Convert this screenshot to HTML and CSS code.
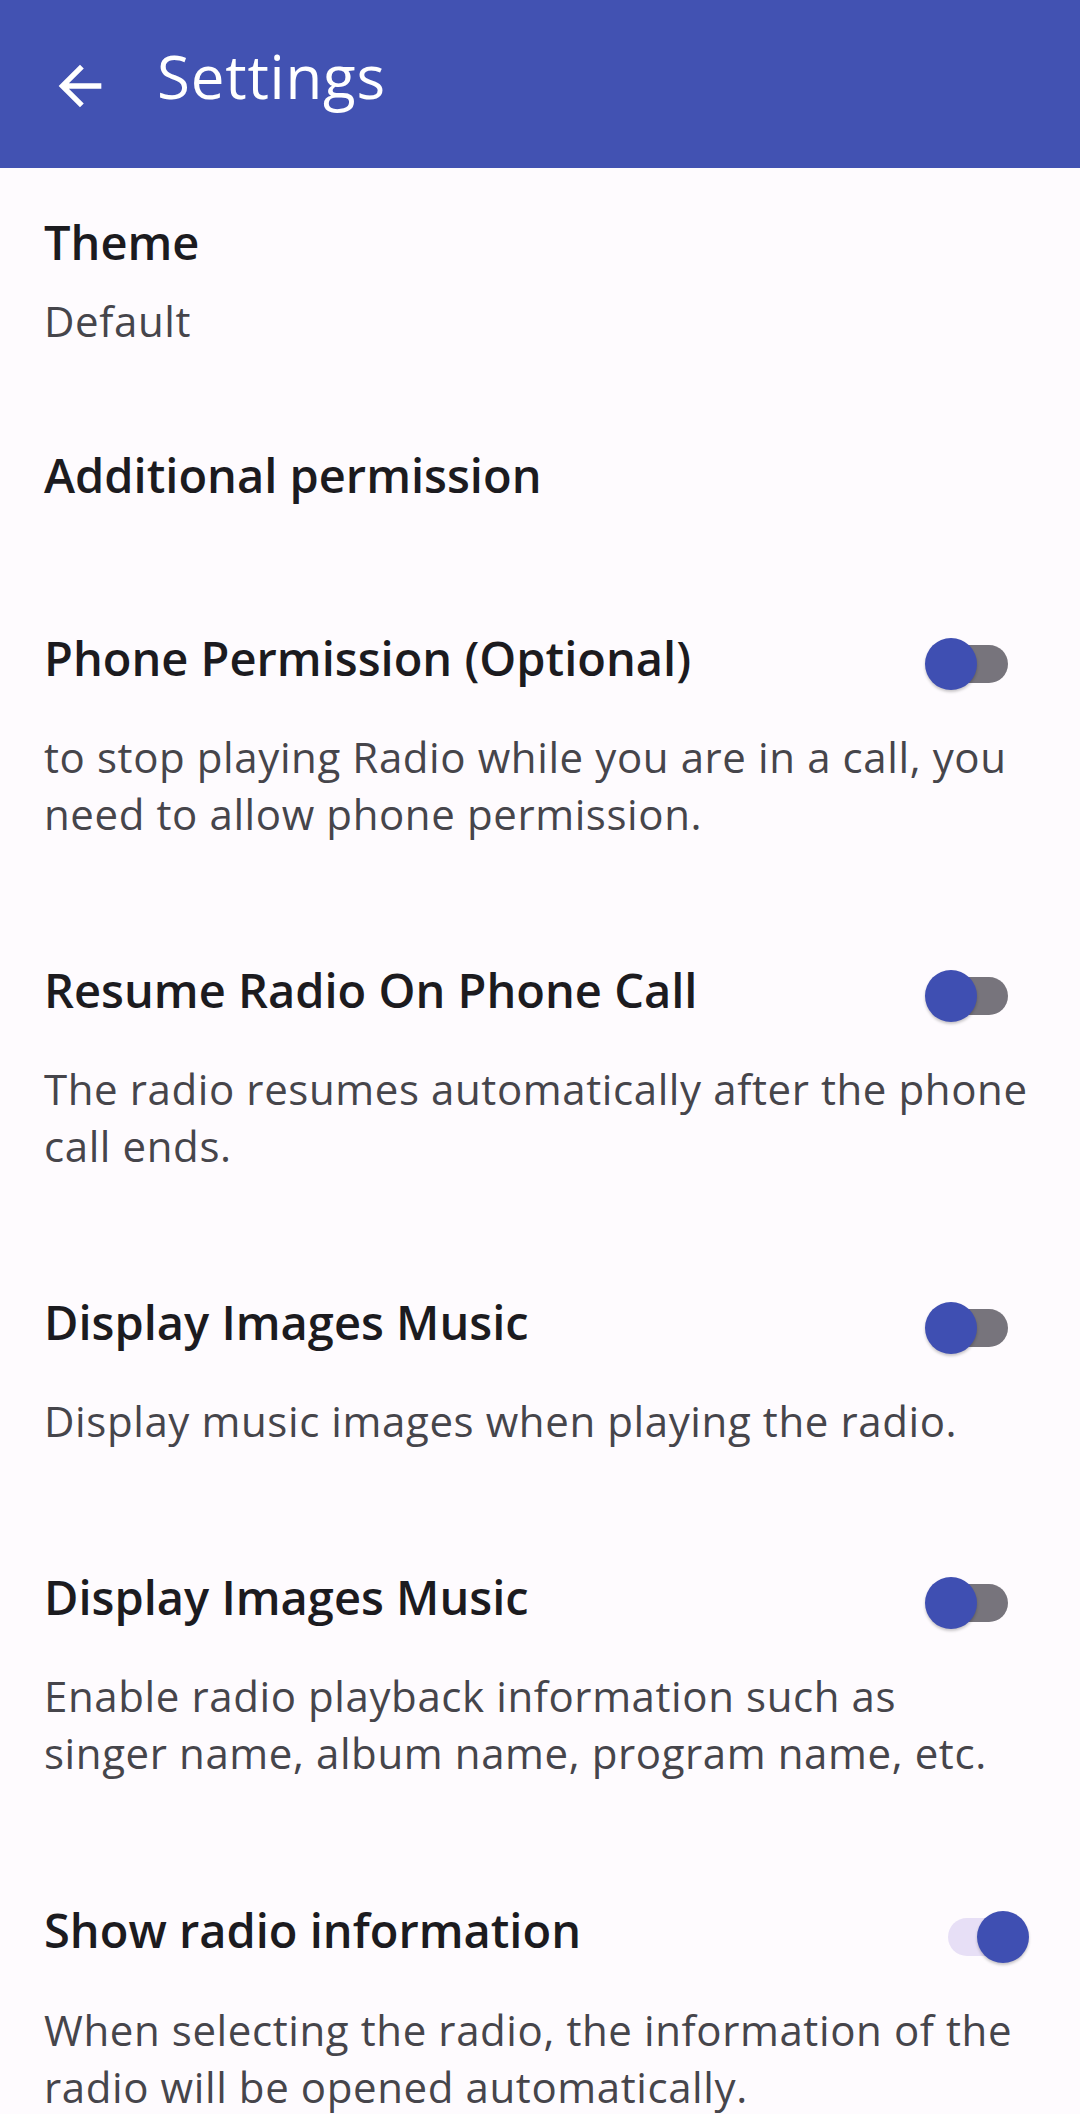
FILE: index.html
```html
<!DOCTYPE html>
<html lang="en">
<head>
<meta charset="utf-8">
<title>Settings</title>
<link rel="stylesheet" href="styles.css">
</head>
<body>
<header class="appbar">
  <span class="back">
    <svg viewBox="0 0 24 24" width="64" height="64"><path d="M20 11H7.83l5.59-5.59L12 4l-8 8 8 8 1.41-1.41L7.83 13H20v-2z" fill="#ffffff"/></svg>
  </span>
  <h1 class="appbar-title">Settings</h1>
</header>
<main class="settings">
  <section class="pref pref-theme">
    <div class="pref-title">Theme</div>
    <div class="pref-summary pref-summary-theme">Default</div>
  </section>
  <section class="pref pref-category">
    <div class="pref-title">Additional permission</div>
  </section>
  <section class="pref pref-first">
    <div class="pref-head">
      <div class="pref-title">Phone Permission (Optional)</div>
      <span class="switch"><span class="track"></span><span class="thumb"></span></span>
    </div>
    <div class="pref-summary">to stop playing Radio while you are in a call, you need to allow phone permission.</div>
  </section>
  <section class="pref">
    <div class="pref-head">
      <div class="pref-title">Resume Radio On Phone Call</div>
      <span class="switch"><span class="track"></span><span class="thumb"></span></span>
    </div>
    <div class="pref-summary">The radio resumes automatically after the phone call ends.</div>
  </section>
  <section class="pref">
    <div class="pref-head">
      <div class="pref-title">Display Images Music</div>
      <span class="switch"><span class="track"></span><span class="thumb"></span></span>
    </div>
    <div class="pref-summary">Display music images when playing the radio.</div>
  </section>
  <section class="pref">
    <div class="pref-head">
      <div class="pref-title">Display Images Music</div>
      <span class="switch"><span class="track"></span><span class="thumb"></span></span>
    </div>
    <div class="pref-summary">Enable radio playback information such as<br>singer name, album name, program name, etc.</div>
  </section>
  <section class="pref">
    <div class="pref-head">
      <div class="pref-title">Show radio information</div>
      <span class="switch switch-on"><span class="track"></span><span class="thumb"></span></span>
    </div>
    <div class="pref-summary">When selecting the radio, the information of the radio will be opened automatically.</div>
  </section>
</main>
</body>
</html>
```
FILE: styles.css
```css
html, body {
  margin: 0;
  padding: 0;
}
body {
  width: 1080px;
  height: 2114px;
  overflow: hidden;
  background: #fefbfe;
  font-family: "Open Sans", "Noto Sans", sans-serif;
  -webkit-font-smoothing: antialiased;
}
.appbar {
  height: 168px;
  background: #4252b2;
  display: flex;
  align-items: center;
  padding-left: 48px;
  box-sizing: border-box;
}
.back {
  width: 64px;
  height: 64px;
  display: flex;
  margin-top: 4px;
}
.appbar-title {
  margin: 0 0 16px 45px;
  font-size: 60px;
  line-height: 60px;
  font-weight: 400;
  color: #ffffff;
  letter-spacing: 0.8px;
}
.settings {
  padding-top: 42px;
}
.pref {
  padding: 0 44px;
  margin-top: 116px;
}
.pref-theme {
  margin-top: 0;
}
.pref-category {
  margin-top: 94px;
}
.pref-first {
  margin-top: 119px;
}
.pref-head {
  display: flex;
  align-items: center;
}
.pref-title {
  flex: 1;
  font-size: 47px;
  line-height: 64px;
  font-weight: 600;
  color: #1c1b1f;
  letter-spacing: 0;
}
.pref-summary {
  margin-top: 38px;
  font-size: 42px;
  line-height: 57px;
  color: #46454b;
  letter-spacing: 0.6px;
}
.pref-summary-theme {
  margin-top: 18px;
}
.switch {
  position: relative;
  flex: none;
  width: 83px;
  height: 52px;
  margin-right: 28px;
  margin-top: 12px;
}
.track {
  position: absolute;
  left: 9px;
  top: 7px;
  width: 74px;
  height: 38px;
  border-radius: 19px;
  background: #77747c;
}
.thumb {
  position: absolute;
  left: 0;
  top: 0;
  width: 52px;
  height: 52px;
  border-radius: 50%;
  background: #3f4fb2;
  box-shadow: 0 2px 3px rgba(0, 0, 0, 0.22);
}
.switch-on {
  margin-right: 7px;
  margin-top: 14px;
}
.switch-on .track {
  left: 2px;
  width: 72px;
  background: #e7dff6;
}
.switch-on .thumb {
  left: 31px;
}
```
